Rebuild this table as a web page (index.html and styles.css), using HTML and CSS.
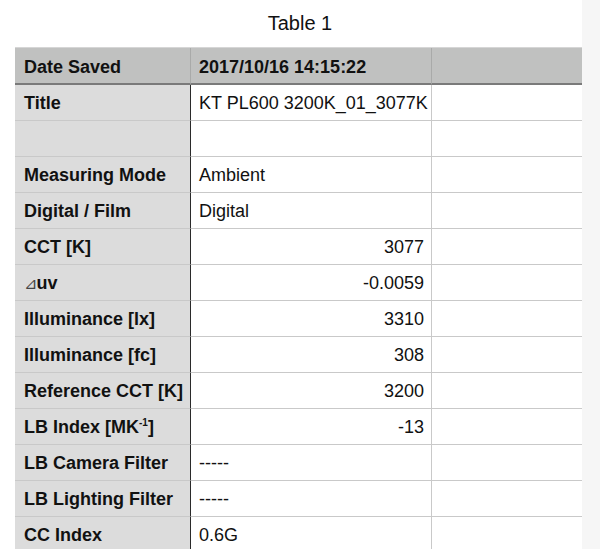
FILE: index.html
```html
<!DOCTYPE html>
<html>
<head>
<meta charset="utf-8">
<link rel="stylesheet" href="styles.css">
</head>
<body>
<div class="page">
  <main class="sheet">
    <h1 class="title">Table 1</h1>
    <div class="grid">
      <div class="c h k">Date Saved</div><div class="c h v">2017/10/16 14:15:22</div><div class="c h e"></div>
      <div class="c k">Title</div><div class="c v">KT PL600 3200K_01_3077K</div><div class="c e"></div>
      <div class="c k"></div><div class="c v"></div><div class="c e"></div>
      <div class="c k">Measuring Mode</div><div class="c v">Ambient</div><div class="c e"></div>
      <div class="c k">Digital / Film</div><div class="c v">Digital</div><div class="c e"></div>
      <div class="c k">CCT [K]</div><div class="c v num">3077</div><div class="c e"></div>
      <div class="c k"><span class="tri">⊿</span>uv</div><div class="c v num">-0.0059</div><div class="c e"></div>
      <div class="c k">Illuminance [lx]</div><div class="c v num">3310</div><div class="c e"></div>
      <div class="c k">Illuminance [fc]</div><div class="c v num">308</div><div class="c e"></div>
      <div class="c k">Reference CCT [K]</div><div class="c v num">3200</div><div class="c e"></div>
      <div class="c k">LB Index [MK<span class="sup">-1</span>]</div><div class="c v num">-13</div><div class="c e"></div>
      <div class="c k">LB Camera Filter</div><div class="c v">-----</div><div class="c e"></div>
      <div class="c k">LB Lighting Filter</div><div class="c v">-----</div><div class="c e"></div>
      <div class="c k">CC Index</div><div class="c v">0.6G</div><div class="c e"></div>
    </div>
  </main>
  <aside class="strip"></aside>
</div>
</body>
</html>
```
FILE: styles.css
```css
html, body {
  margin: 0;
  padding: 0;
  background: #ffffff;
  font-family: "Liberation Sans", Arial, sans-serif;
  color: #111111;
}
.page {
  display: flex;
  height: 549px;
  overflow: hidden;
}
.sheet {
  width: 582px;
  flex: none;
  background: #ffffff;
}
.strip {
  flex: 1;
  background: #f6f6f6;
}
.title {
  margin: 13px 0 13px 0;
  height: 21px;
  line-height: 21px;
  font-size: 20px;
  font-weight: normal;
  text-align: center;
  padding-left: 18px;
  color: #111111;
}
.grid {
  margin-left: 15px;
  display: grid;
  grid-template-columns: 176px 241px 150px;
  border-top: 1px solid #d6d6d6;
}
.c {
  box-sizing: border-box;
  height: 36px;
  border-bottom: 1px solid #c9c9c9;
  border-right: 1px solid #c9c9c9;
  font-size: 18px;
  line-height: 37px;
  white-space: nowrap;
  overflow: hidden;
}
.k {
  background: #dcdcdc;
  font-weight: bold;
  padding-left: 9px;
  border-right: 1px solid #2a2a2a;
}
.v {
  padding-left: 8px;
  padding-right: 7px;
}
.e {
  border-right: none;
}
.num {
  text-align: right;
}
.h {
  background: #c0c1c0;
  font-weight: bold;
  height: 37px;
  line-height: 39px;
  border-bottom: 2px solid #7a7a7a;
  border-right: 1px solid #a9aaa9;
}
.h.e {
  border-right: none;
}
.tri {
  font-family: "DejaVu Sans", sans-serif;
  font-weight: normal;
  font-size: 16px;
  color: #444444;
  margin-right: -1px;
}
.sup {
  font-size: 10px;
  vertical-align: 7px;
  line-height: 0;
}
```
